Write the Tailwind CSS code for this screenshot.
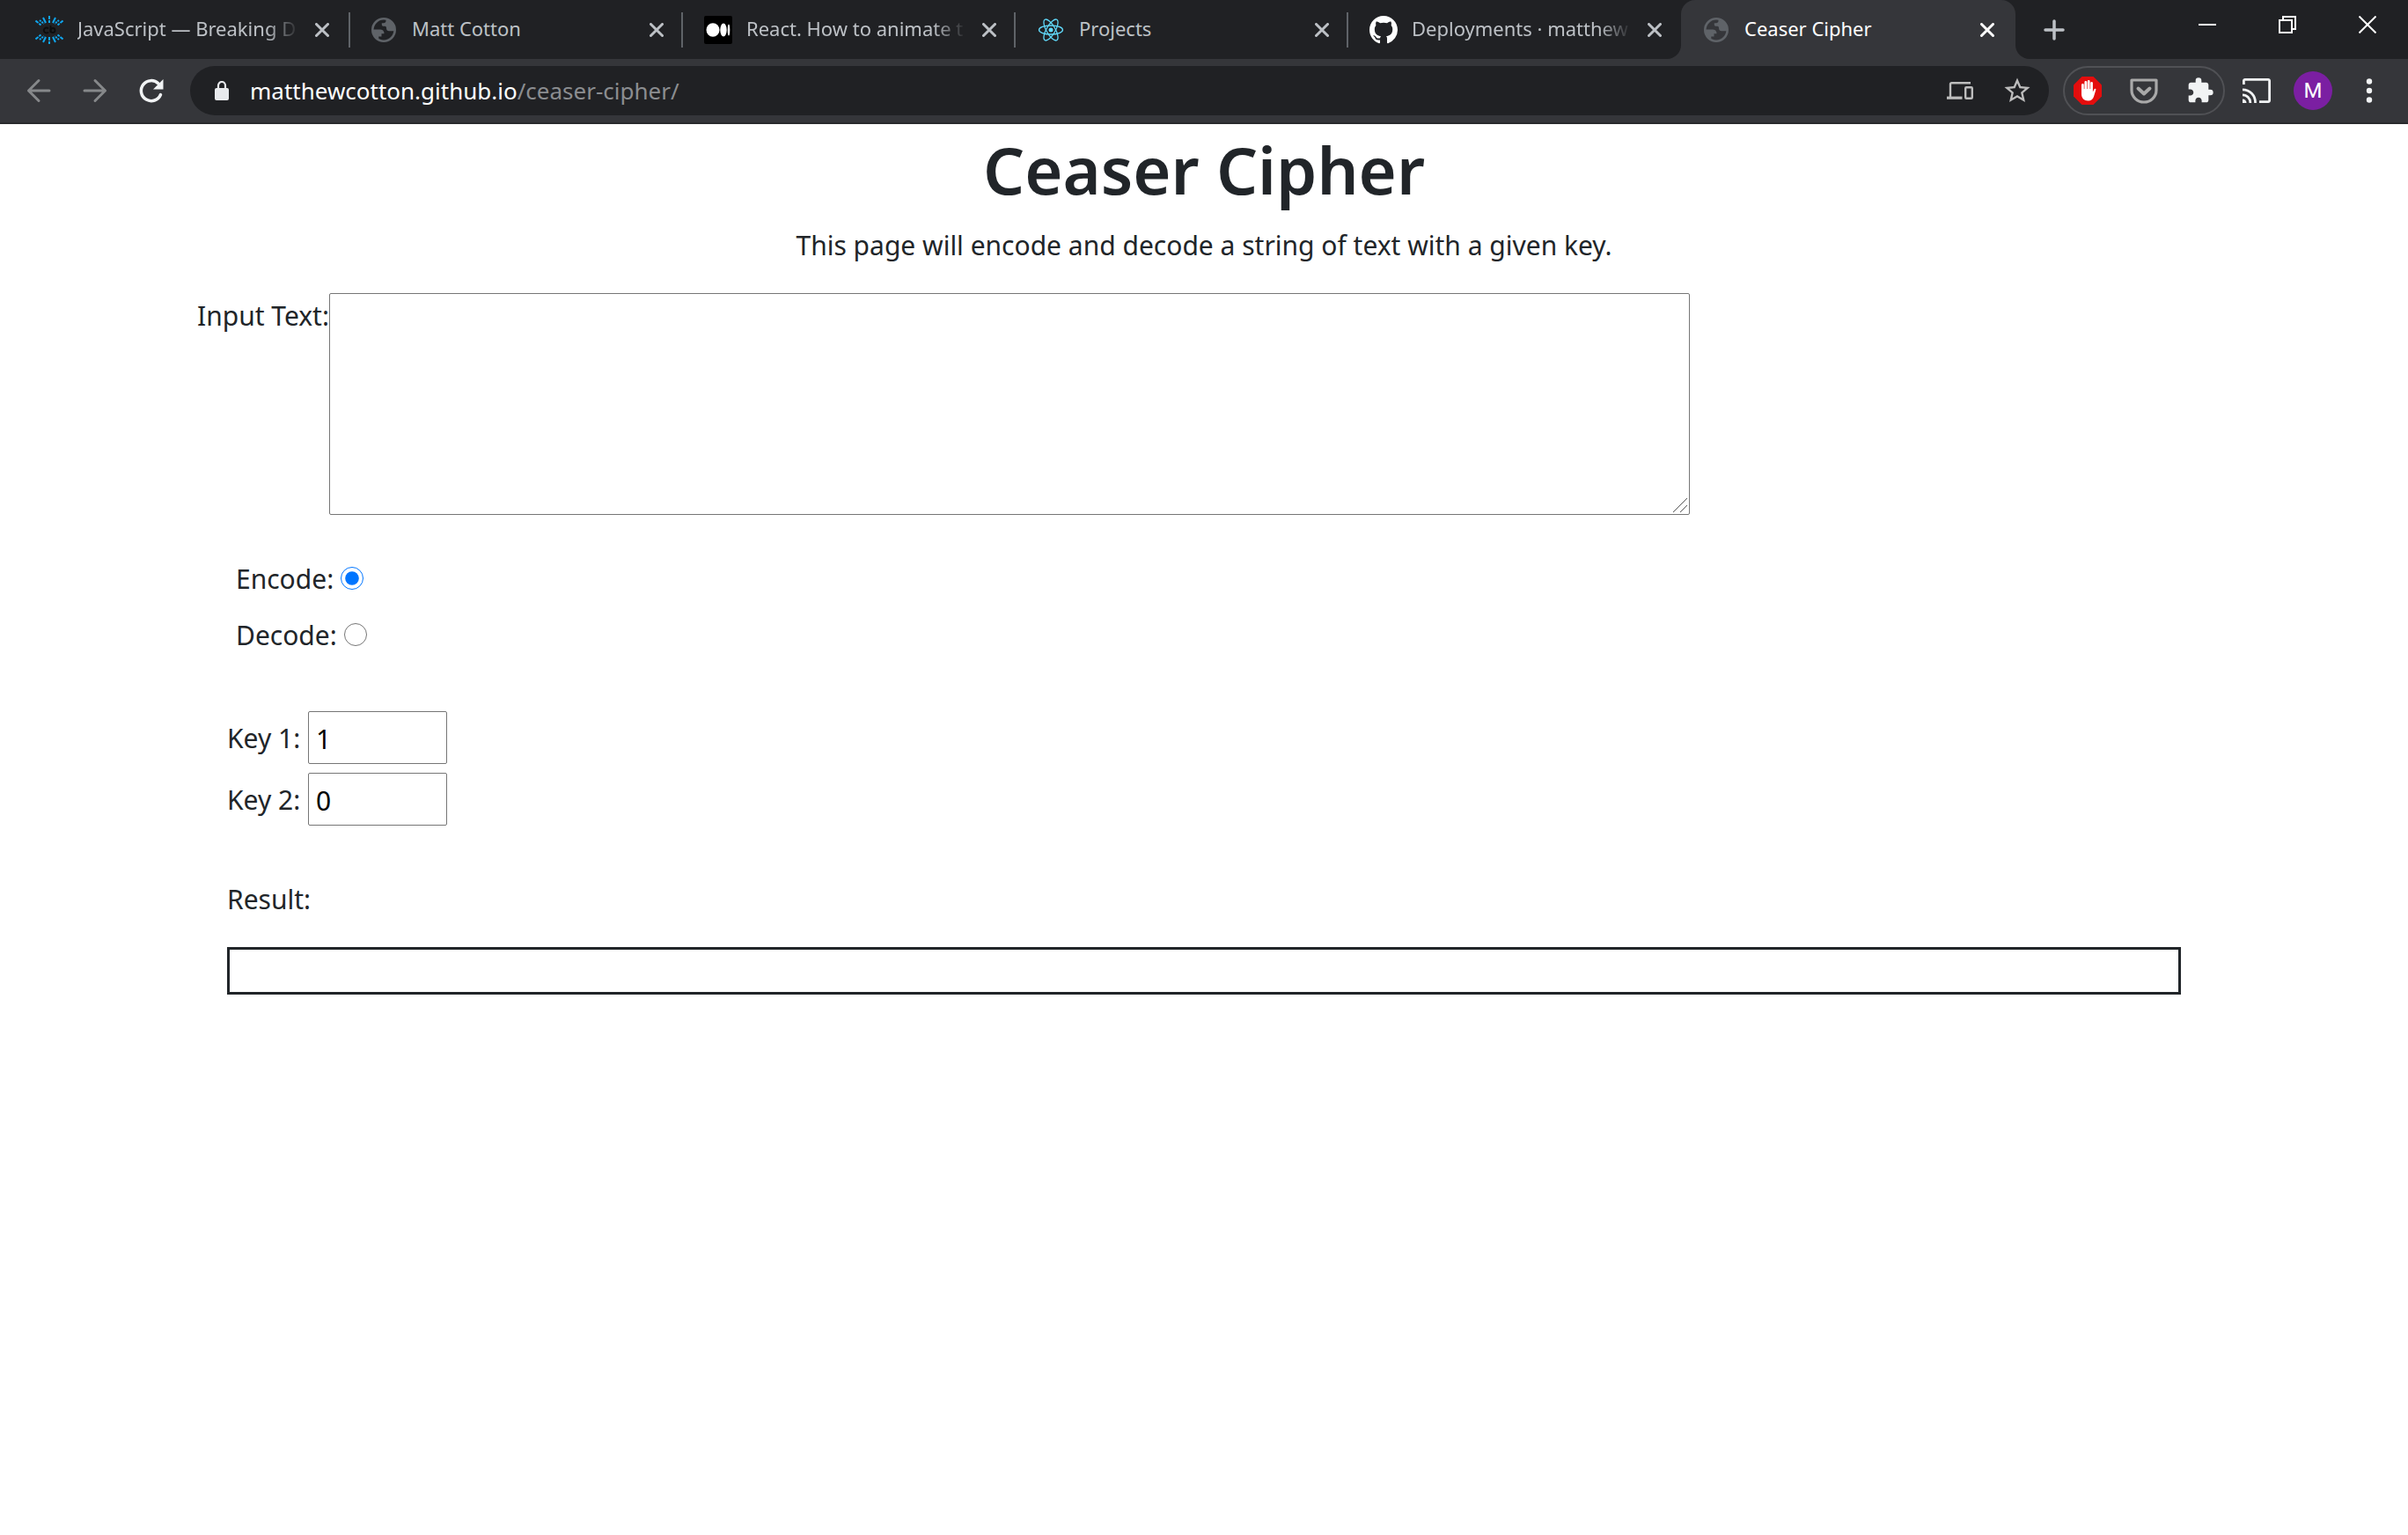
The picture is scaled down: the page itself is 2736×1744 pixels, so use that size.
<!DOCTYPE html>
<html lang="en">
<head>
<meta charset="utf-8">
<title>Ceaser Cipher</title>
<script src="https://cdn.jsdelivr.net/npm/@tailwindcss/browser@4"></script>
</head>
<body class="min-h-screen bg-white font-['Noto_Sans',sans-serif] text-[30px] leading-[48px] text-[#212529]">

<!-- shared glyphs -->
<svg class="hidden" aria-hidden="true">
  <symbol id="x" viewBox="0 0 16 16"><path d="M1.500 1.500l13 13M14.500 1.500l-13 13" fill="none" stroke="currentColor" stroke-width="3" stroke-linecap="round"/></symbol>
  <symbol id="globe" viewBox="0 0 32 32"><circle cx="16" cy="16" r="12.700" fill="none" stroke="#5f6368" stroke-width="2.600"/><path d="M3 15.500h8c3.500 0 5.500 1.300 5.500 4.700h-3v3.300h-3.200v4.800C6 26 3 21.500 3 15.500zM18.500 3v2.500c0 1.800-1 2.700-2.700 2.700h-2v1.700c0 1.200.8 1.800 1.900 1.800h1.500c1.500 0 1.800 1 1.800 2.500 0 2 1.300 3 3 3h6.500C29 10 25 4.500 18.500 3z" fill="#5f6368"/></symbol>
</svg>

<header class="bg-[#35363a] border-b-2 border-[#292a2d] text-[#bdc1c6]">
  <div class="flex h-[67px] text-[22px] leading-[30px]">
    <nav aria-label="Tabs" class="flex items-center bg-[#202124] rounded-br-2xl pl-5 shrink-0">
      <div class="flex items-center w-[378px] h-10 pl-5 pr-[22px] border-r-2 border-[#5f6368]">
        <svg class="size-8 shrink-0" viewBox="0 0 32 32"><g stroke="#0fa5ee" stroke-width="2"><path d="M16 0v8M16 24v8" stroke-dasharray="4 1"/><path d="M9 2l3 6M23 2l-3 6M9 30l3-6M23 30l-3-6"/><path d="M.500 5.500l6 5M31.500 5.500l-6 5M.500 26.500l6-5M31.500 26.500l-6-5" stroke-dasharray="4 1"/><path d="M5 5l5 4M27 5l-5 4M5 27l5-4M27 27l-5-4" stroke-dasharray="2 1"/></g><g fill="none" stroke="#0c0d0e" stroke-width="1.800"><path d="M15 14.500a3 3 0 1 0 0 4"/><path d="M17.500 11v8"/><circle cx="20" cy="16.500" r="2.500"/></g></svg>
        <span class="ml-4 mr-[18px] pb-1 flex-1 overflow-hidden whitespace-nowrap [mask-image:linear-gradient(to_right,#000_85%,transparent)]">JavaScript — Breaking D</span>
        <button aria-label="Close tab"><svg class="size-4"><use href="#x"/></svg></button>
      </div>
      <div class="flex items-center w-[378px] h-10 pl-[22px] pr-5 border-r-2 border-[#5f6368]">
        <svg class="size-8 shrink-0"><use href="#globe"/></svg>
        <span class="ml-4 mr-[18px] pb-1 flex-1 overflow-hidden whitespace-nowrap">Matt Cotton</span>
        <button aria-label="Close tab"><svg class="size-4"><use href="#x"/></svg></button>
      </div>
      <div class="flex items-center w-[378px] h-10 pl-6 pr-5 border-r-2 border-[#5f6368]">
        <svg class="size-8 shrink-0" viewBox="0 0 32 32"><rect width="32" height="32" rx="2" fill="#000"/><g fill="#fff"><ellipse cx="10" cy="16" rx="7.500" ry="7.800"/><ellipse cx="22" cy="16" rx="3.700" ry="7.400"/><ellipse cx="28" cy="16" rx="1.300" ry="6.600"/></g></svg>
        <span class="ml-4 mr-[18px] pb-1 flex-1 overflow-hidden whitespace-nowrap [mask-image:linear-gradient(to_right,#000_85%,transparent)]">React. How to animate t</span>
        <button aria-label="Close tab"><svg class="size-4"><use href="#x"/></svg></button>
      </div>
      <div class="flex items-center w-[378px] h-10 pl-6 pr-5 border-r-2 border-[#5f6368]">
        <svg class="size-8 shrink-0" viewBox="0 0 32 32"><g fill="none" stroke="#61dafb" stroke-width="1.300"><ellipse cx="16" cy="16" rx="13.500" ry="5"/><ellipse cx="16" cy="16" rx="13.500" ry="5" transform="rotate(60 16 16)"/><ellipse cx="16" cy="16" rx="13.500" ry="5" transform="rotate(120 16 16)"/></g><circle cx="16" cy="16" r="2.500" fill="#61dafb"/></svg>
        <span class="ml-4 mr-[18px] pb-1 flex-1 overflow-hidden whitespace-nowrap">Projects</span>
        <button aria-label="Close tab"><svg class="size-4"><use href="#x"/></svg></button>
      </div>
      <div class="flex items-center w-[378px] h-10 pl-6 pr-[22px]">
        <svg class="size-8 shrink-0" viewBox="0 0 16 16" fill="#fff"><path d="M8 0C3.580 0 0 3.580 0 8c0 3.540 2.290 6.530 5.470 7.590.4.070.55-.17.55-.38 0-.19-.01-.82-.01-1.490-2.010.37-2.530-.49-2.690-.94-.09-.23-.48-.94-.82-1.130-.28-.15-.68-.52-.01-.53.63-.01 1.080.58 1.230.82.72 1.210 1.870.87 2.330.66.070-.52.28-.87.51-1.070-1.780-.2-3.640-.89-3.640-3.950 0-.87.31-1.590.82-2.150-.08-.2-.36-1.020.08-2.120 0 0 .67-.21 2.200.82.64-.18 1.320-.27 2-.27s1.360.09 2 .27c1.530-1.040 2.200-.82 2.200-.82.44 1.100.16 1.920.08 2.120.51.56.82 1.270.82 2.150 0 3.070-1.870 3.750-3.650 3.950.29.25.54.73.54 1.480 0 1.070-.01 1.930-.01 2.200 0 .21.15.46.55.38A8.010 8.010 0 0 0 16 8c0-4.420-3.580-8-8-8z"/></svg>
        <span class="ml-4 mr-[18px] pb-1 flex-1 overflow-hidden whitespace-nowrap [mask-image:linear-gradient(to_right,#000_85%,transparent)]">Deployments · matthew</span>
        <button aria-label="Close tab"><svg class="size-4"><use href="#x"/></svg></button>
      </div>
    </nav>
    <div class="shrink-0 bg-linear-to-b from-[#202124] from-50% to-[#35363a] to-50%">
      <div class="flex items-center w-[380px] h-full pl-6 pr-6 rounded-t-2xl bg-[#35363a] text-white">
        <svg class="size-8 shrink-0"><use href="#globe"/></svg>
        <span class="ml-4 mr-[18px] pb-1 flex-1 overflow-hidden whitespace-nowrap">Ceaser Cipher</span>
        <button aria-label="Close tab"><svg class="size-4"><use href="#x"/></svg></button>
      </div>
    </div>
    <div class="flex flex-1 items-center bg-[#202124] rounded-bl-2xl pl-8 pr-9">
      <button aria-label="New tab"><svg class="size-6" viewBox="0 0 24 24"><path d="M12 2v20M2 12h20" stroke="currentColor" stroke-width="3.500" stroke-linecap="round"/></svg></button>
      <div class="ml-auto flex gap-[71px] pb-3 text-white">
        <button aria-label="Minimize"><svg class="size-5" viewBox="0 0 20 20"><path d="M0 10h20" stroke="currentColor" stroke-width="2"/></svg></button>
        <button aria-label="Restore"><svg class="size-5" viewBox="0 0 20 20" fill="none" stroke="currentColor" stroke-width="2"><path d="M1 5h14v14H1zM5 5V1h14v14h-4"/></svg></button>
        <button aria-label="Close window"><svg class="size-5" viewBox="0 0 20 20"><path d="M.500 .500l19 19M19.500 .500l-19 19" stroke="currentColor" stroke-width="2"/></svg></button>
      </div>
    </div>
  </div>

  <div class="flex items-center h-[72px] pl-7 pr-7">
    <button aria-label="Back" class="mr-8 text-[#86888a]"><svg class="size-8" viewBox="0 0 32 32" fill="none" stroke="currentColor" stroke-width="3" stroke-linecap="round" stroke-linejoin="round"><path d="M28 16H4.500M16 4.500L4.500 16 16 27.500"/></svg></button>
    <button aria-label="Forward" class="mr-8 text-[#86888a]"><svg class="size-8" viewBox="0 0 32 32" fill="none" stroke="currentColor" stroke-width="3" stroke-linecap="round" stroke-linejoin="round"><path d="M4 16h23.500M16 4.500L27.500 16 16 27.500"/></svg></button>
    <button aria-label="Reload" class="mr-7 text-[#f1f3f4]"><svg class="size-8" viewBox="0 0 32 32"><path d="M26.500 20.500A11.500 11.500 0 1 1 24 8" fill="none" stroke="currentColor" stroke-width="3.500" stroke-linecap="round"/><path d="M29.500 3v11.500H18z" fill="currentColor"/></svg></button>
    <div class="flex flex-1 items-center h-14 rounded-full bg-[#202124] pl-7 pr-5">
      <svg class="w-4 h-[22px] shrink-0" viewBox="0 0 16 22"><rect y="8" width="16" height="14" rx="2" fill="#e8eaed"/><path d="M4 9V5a4 4 0 0 1 8 0v4" fill="none" stroke="#e8eaed" stroke-width="2.200"/></svg>
      <a href="#" class="ml-6 text-[26px] text-[#8b8d90]"><span class="text-white">matthewcotton.github.io</span>/ceaser-cipher/</a>
      <button aria-label="Send to your devices" class="ml-auto text-[#bdbdbd]"><svg class="w-[30px] h-5" viewBox="0 0 30 20" fill="none" stroke="currentColor" stroke-width="2.400"><path d="M27 1.200H5.500a1.500 1.500 0 0 0-1.500 1.500V17"/><path d="M0 18.200h17.500" stroke-width="3.200"/><rect x="21.200" y="6.200" width="7.600" height="12.600" rx="1"/></svg></button>
      <button aria-label="Bookmark" class="ml-[34px] text-[#bdbdbd]"><svg class="size-8" viewBox="1 1 22 22" fill="currentColor"><path d="M22 9.240l-7.190-.62L12 2 9.190 8.630 2 9.240l5.460 4.730L5.820 21 12 17.270 18.180 21l-1.630-7.030L22 9.240zM12 15.400l-3.760 2.270 1-4.280-3.320-2.880 4.380-.38L12 6.100l1.710 4.040 4.380.38-3.320 2.880 1 4.280L12 15.400z"/></svg></button>
    </div>
    <div class="ml-4 flex items-center gap-8 w-[184px] h-14 shrink-0 rounded-full border-2 border-[#505155] px-2.5">
      <button aria-label="Ad blocker"><svg class="size-8" viewBox="0 0 32 32"><path d="M9.500 0h13L32 9.500v13L22.500 32h-13L0 22.500v-13z" fill="#e40d0d"/><path d="M9 9.500a1.400 1.400 0 0 1 2.800 0V14h.6V6.500a1.400 1.400 0 0 1 2.800 0V14h.6V5.400a1.400 1.400 0 0 1 2.800 0V14h.6V7a1.400 1.400 0 0 1 2.700 0v10.500l1.500-3c.6-1.200 2.200-1 2 .3l-2.400 8C22 26 20 27.500 16.500 27.500 12 27.500 9 24.500 9 20z" fill="#fff"/></svg></button>
      <button aria-label="Pocket"><svg class="size-8" viewBox="0 0 32 32" fill="none" stroke="#a9a9a9" stroke-linejoin="round" stroke-linecap="round"><path d="M2 4h28v11.500a14 13.500 0 0 1-28 0z" stroke-width="3.200"/><path d="M9.500 13.500l6.500 6 6.500-6" stroke-width="4"/></svg></button>
      <button aria-label="Extensions"><svg class="size-8" viewBox="0 0 24 24" fill="#f1f3f4"><path d="M20.500 11H19V7c0-1.100-.9-2-2-2h-4V3.500a2.500 2.500 0 0 0-5 0V5H4c-1.100 0-2 .9-2 2v3.800h1.500c1.500 0 2.700 1.200 2.700 2.700S5 16.200 3.500 16.200H2V20c0 1.100.9 2 2 2h3.800v-1.500c0-1.500 1.200-2.700 2.700-2.700s2.700 1.200 2.700 2.700V22H17c1.100 0 2-.9 2-2v-4h1.500a2.500 2.500 0 0 0 0-5z"/></svg></button>
    </div>
    <button aria-label="Cast" class="ml-5 text-[#f1f3f4]"><svg class="w-8 h-7" viewBox="0 0 32 28" fill="none" stroke="currentColor" stroke-width="2.800"><path d="M1.400 7V2.800A1.400 1.400 0 0 1 2.800 1.400h26.400a1.400 1.400 0 0 1 1.400 1.400v22.400a1.400 1.400 0 0 1-1.400 1.400H19M0 12.800A14.500 14.500 0 0 1 14.500 28M0 18.800A8.800 8.800 0 0 1 8.800 28"/><path d="M0 23.500A4.500 4.500 0 0 1 4.500 28H0z" fill="currentColor" stroke="none"/></svg></button>
    <button aria-label="Profile" class="ml-[26px] size-11 shrink-0 rounded-full bg-[#7b1fa2] font-['Roboto',sans-serif] text-2xl leading-11 text-white">M</button>
    <button aria-label="Menu" class="ml-[26px] text-[#f1f3f4]"><svg class="size-8" viewBox="0 0 32 32" fill="currentColor"><circle cx="16" cy="5.500" r="3.200"/><circle cx="16" cy="16" r="3.200"/><circle cx="16" cy="26.500" r="3.200"/></svg></button>
  </div>
</header>

<main class="mx-auto max-w-[2280px]">
  <h1 class="pt-1 text-center text-[74px] leading-[96px] font-semibold">Ceaser Cipher</h1>
  <p class="mt-3.5 text-center">This page will encode and decode a string of text with a given key.</p>

  <div class="mt-[30px] flex items-start">
    <label for="input" class="flex justify-end w-[146px] pt-0.5 shrink-0 whitespace-nowrap">Input Text:</label>
    <div class="relative">
      <textarea id="input" class="block w-[1546px] h-[252px] max-w-full resize-none rounded-xs border border-[#767676]"></textarea>
      <svg class="absolute right-[3px] bottom-[3px] size-4 pointer-events-none" viewBox="0 0 16 16"><path d="M0 16L16 0M8 16l8-8" stroke="#555" stroke-width="1"/></svg>
    </div>
  </div>

  <div class="mt-12 pl-10 flex flex-col gap-4">
    <div class="flex items-center h-12"><label for="encode" class="pt-0.5">Encode:</label><input id="encode" type="radio" name="mode" checked class="ml-2 size-[26px]"></div>
    <div class="flex items-center h-12"><label for="decode" class="pt-0.5">Decode:</label><input id="decode" type="radio" name="mode" class="ml-2 size-[26px]"></div>
  </div>

  <div class="mt-[63px] pl-[30px] flex flex-col gap-2.5">
    <div class="flex items-center"><label for="key1" class="w-[92px] pt-0.5 whitespace-nowrap">Key 1:</label><input id="key1" type="text" value="1" class="w-[158px] h-[60px] rounded-xs border border-[#767676] pt-0.5 px-2 text-black"></div>
    <div class="flex items-center"><label for="key2" class="w-[92px] pt-0.5 whitespace-nowrap">Key 2:</label><input id="key2" type="text" value="0" class="w-[158px] h-[60px] rounded-xs border border-[#767676] pt-0.5 px-2 text-black"></div>
  </div>

  <div class="mt-[60px] px-[30px]">
    <p>Result:</p>
    <output class="mt-[30px] block h-[54px] border-3 border-[#212529]" aria-label="Result"></output>
  </div>
</main>
</body>
</html>
